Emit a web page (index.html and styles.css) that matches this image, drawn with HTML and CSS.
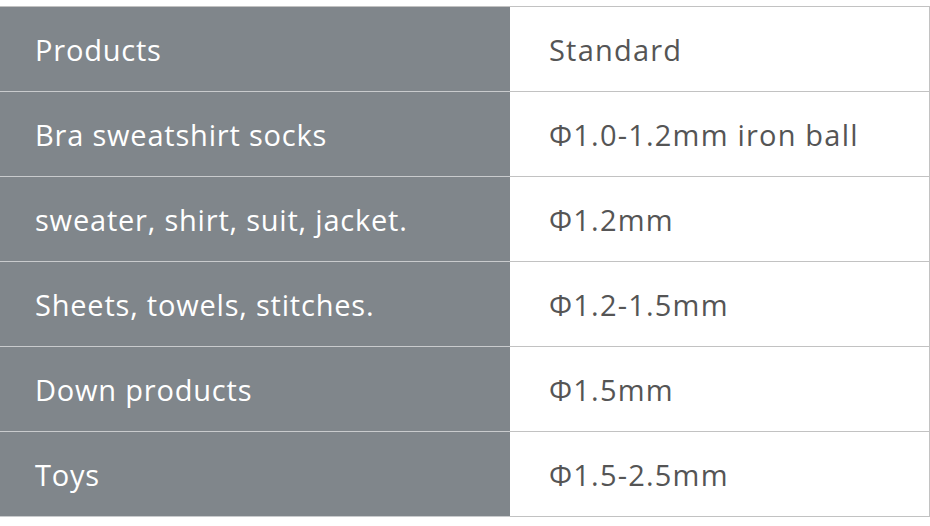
FILE: index.html
```html
<!DOCTYPE html>
<html lang="en">
<head>
<meta charset="utf-8">
<title>Products</title>
<link rel="stylesheet" href="styles.css">
</head>
<body>
<div class="spec-table">
  <div class="cell head">Products</div><div class="cell val">Standard</div>
  <div class="cell head">Bra sweatshirt socks</div><div class="cell val">Φ1.0-1.2mm iron ball</div>
  <div class="cell head">sweater, shirt, suit, jacket.</div><div class="cell val">Φ1.2mm</div>
  <div class="cell head">Sheets, towels, stitches.</div><div class="cell val">Φ1.2-1.5mm</div>
  <div class="cell head">Down products</div><div class="cell val">Φ1.5mm</div>
  <div class="cell head">Toys</div><div class="cell val">Φ1.5-2.5mm</div>
</div>
</body>
</html>
```
FILE: styles.css
```css
html, body {
  margin: 0;
  padding: 0;
  background: #ffffff;
}
body {
  padding-top: 6px;
  font-family: "Open Sans", "Noto Sans", sans-serif;
}
.spec-table {
  display: grid;
  grid-template-columns: 510px 1fr;
  width: 930px;
  box-sizing: border-box;
  border-top: 1px solid #c2c2c2;
  border-right: 1px solid #c2c2c2;
}
.cell {
  height: 84px;
  display: flex;
  align-items: center;
  font-size: 29px;
}
.head {
  background: #80868b;
  color: #ffffff;
  padding-left: 35px;
  letter-spacing: 0.8px;
  border-bottom: 1px solid #c9cbcd;
}
.val {
  background: #ffffff;
  color: #555555;
  padding-left: 39px;
  letter-spacing: 1.2px;
  border-bottom: 1px solid #c2c2c2;
}
```
